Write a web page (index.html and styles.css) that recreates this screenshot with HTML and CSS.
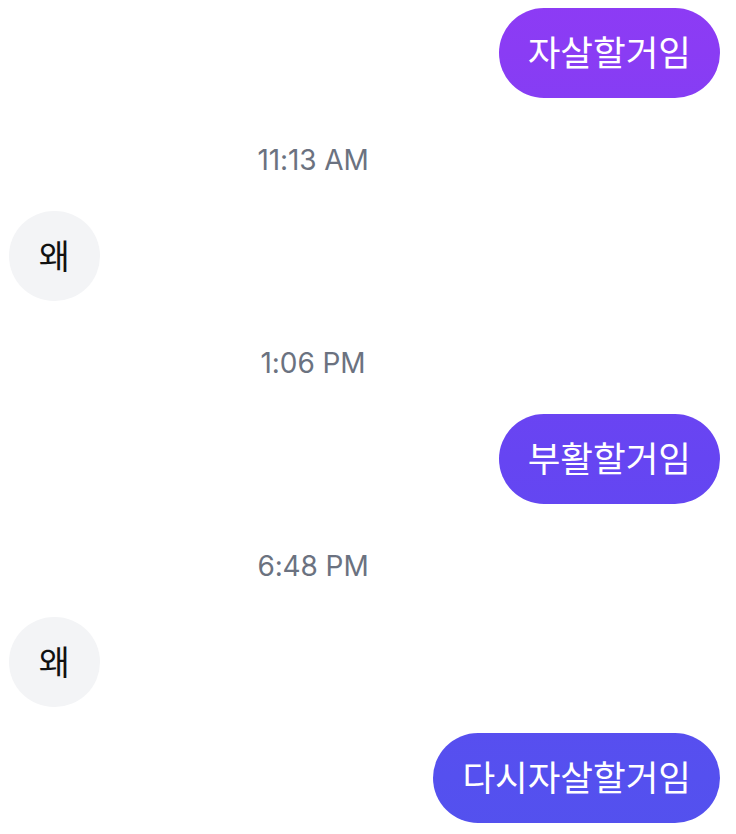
FILE: index.html
```html
<!DOCTYPE html>
<html lang="ko">
<head>
<meta charset="utf-8">
<title>Chat</title>
<link rel="stylesheet" href="styles.css">
</head>
<body>
<main class="chat">
  <div class="row row-out"><div class="bubble out">자살할거임</div></div>
  <div class="stamp">11:13 AM</div>
  <div class="row row-in"><div class="bubble in">왜</div></div>
  <div class="stamp">1:06 PM</div>
  <div class="row row-out"><div class="bubble out">부활할거임</div></div>
  <div class="stamp">6:48 PM</div>
  <div class="row row-in"><div class="bubble in">왜</div></div>
  <div class="row row-out next"><div class="bubble out">다시자살할거임</div></div>
</main>
</body>
</html>
```
FILE: styles.css
```css
html, body {
  margin: 0;
  padding: 0;
  background: #ffffff;
}
body {
  font-family: "Noto Sans CJK KR", "Noto Sans", sans-serif;
}
.chat {
  display: flex;
  flex-direction: column;
  padding: 8px 16px 0 9px;
}
.row {
  display: flex;
}
.row-out {
  justify-content: flex-end;
}
.row-in {
  justify-content: flex-start;
}
.next {
  margin-top: 26px;
}
.bubble {
  height: 90px;
  box-sizing: border-box;
  display: flex;
  align-items: center;
  justify-content: center;
  border-radius: 45px;
  line-height: 1;
}
.out {
  padding: 0 29px 4px;
  font-size: 35.5px;
  color: #ffffff;
  background-image: linear-gradient(180deg, #8d3bf5 0%, #8a3cf4 6%, #6645f2 55%, #5550ef 93%, #5351ee 100%);
  background-attachment: fixed;
  background-size: 736px 834px;
}
.in {
  width: 91px;
  padding-bottom: 2px;
  color: #111111;
  background: #f3f4f6;
  font-size: 34px;
}
.stamp {
  font-family: Inter, "Noto Sans", sans-serif;
  font-size: 28px;
  line-height: 32px;
  color: #6b7280;
  text-align: center;
  padding-right: 103px;
  margin: 46px 0 35px;
  letter-spacing: -0.1px;
}
```
